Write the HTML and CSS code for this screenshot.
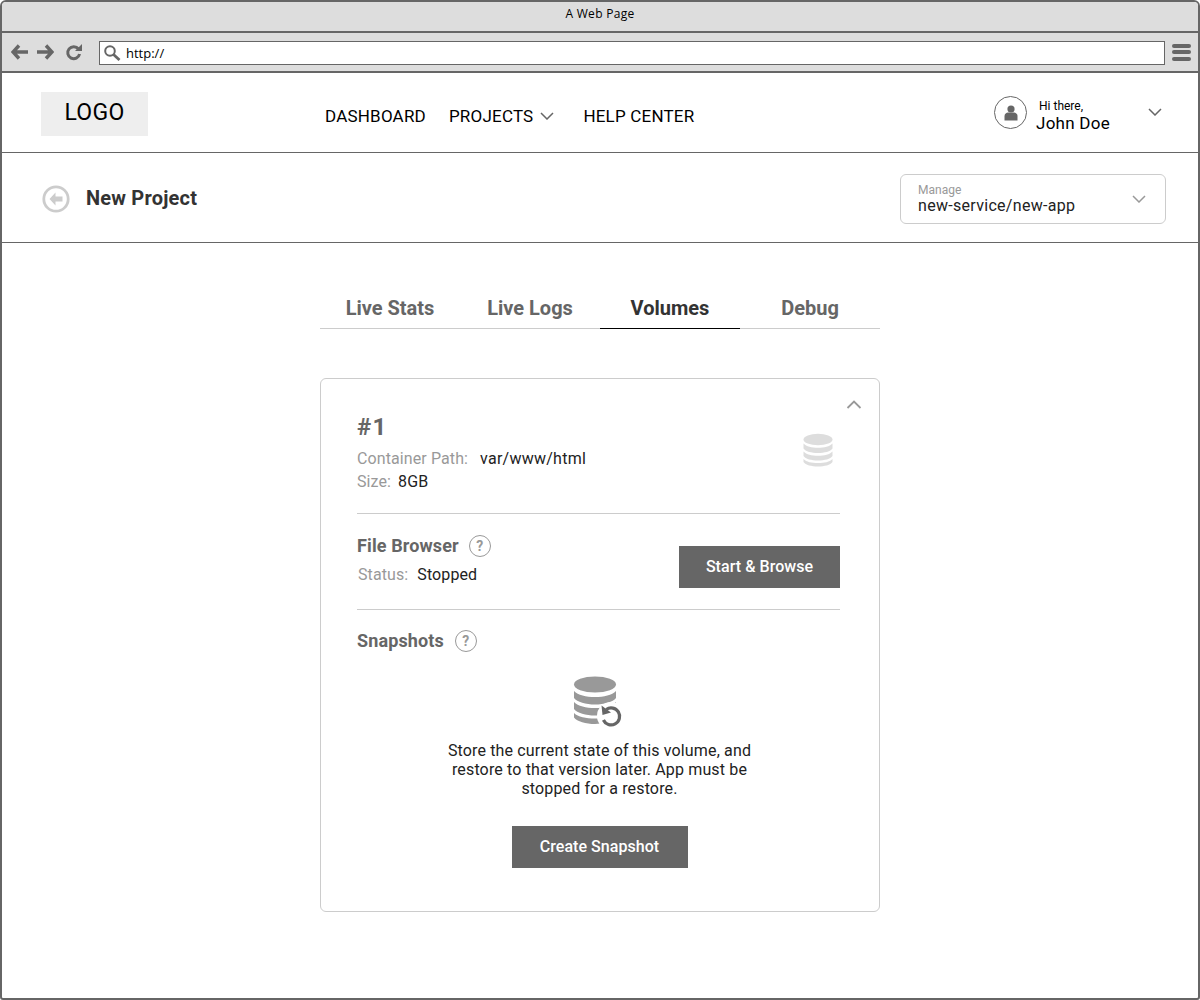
FILE: index.html
```html
<!DOCTYPE html>
<html lang="en">
<head>
<meta charset="utf-8">
<title>A Web Page</title>
<link rel="stylesheet" href="styles.css">
</head>
<body>
<div class="window">
  <div class="titlebar">A Web Page</div>
  <div class="toolbar">
    <svg class="tb-icon" width="18" height="16" viewBox="0 0 18 16"><path d="M8 1.500 2 8l6 6.500M2.500 8H17" fill="none" stroke="#666" stroke-width="3.400"/></svg>
    <svg class="tb-icon" width="18" height="16" viewBox="0 0 18 16"><path d="M10 1.500 16 8l-6 6.500M15.500 8H1" fill="none" stroke="#666" stroke-width="3.400"/></svg>
    <svg class="tb-icon reload" width="18" height="17" viewBox="0 0 18 17"><path d="M13.500 5A6 6 0 1 0 14.600 10" fill="none" stroke="#666" stroke-width="3"/><path d="M10 7h7V0z" fill="#666"/></svg>
    <div class="urlbar">
      <svg width="18" height="18" viewBox="0 0 18 18"><circle cx="7" cy="7" r="4.800" fill="none" stroke="#666" stroke-width="2"/><path d="m10.500 10.500 6 5.500" stroke="#666" stroke-width="2.800"/></svg>
      <span>http://</span>
    </div>
    <div class="burger"><i></i><i></i><i></i></div>
  </div>
  <header class="topnav">
    <div class="logo">LOGO</div>
    <nav class="menu">
      <a>DASHBOARD</a>
      <a class="has-caret">PROJECTS<svg width="14" height="8" viewBox="0 0 14 8"><path d="m1 1 6 6 6-6" fill="none" stroke="#666" stroke-width="1.500"/></svg></a>
      <a>HELP CENTER</a>
    </nav>
    <div class="user">
      <div class="avatar">
        <svg width="14" height="16" viewBox="0 0 14 16"><circle cx="7" cy="4" r="3.600" fill="#666"/><path d="M0.500 15.500V11c0-2.400 2-3.600 3.500-3.600h6c1.500 0 3.500 1.200 3.500 3.600v4.500z" fill="#666"/></svg>
      </div>
      <div class="user-text"><small>Hi there,</small><strong>John Doe</strong></div>
      <svg class="user-caret" width="14" height="8" viewBox="0 0 14 8"><path d="m1 1 6 6 6-6" fill="none" stroke="#666" stroke-width="1.500"/></svg>
    </div>
  </header>
  <section class="subhead">
    <svg class="back" width="28" height="28" viewBox="0 0 28 28"><circle cx="14" cy="14" r="12.200" fill="none" stroke="#ccc" stroke-width="2.800"/><path d="m13.500 7.500-6 6.500 6 6.500v-4h7v-5h-7z" fill="#ccc"/></svg>
    <h1>New Project</h1>
    <div class="manage">
      <div class="manage-text"><small>Manage</small><span>new-service/new-app</span></div>
      <svg width="14" height="8" viewBox="0 0 14 8"><path d="m1 1 6 6 6-6" fill="none" stroke="#999" stroke-width="1.500"/></svg>
    </div>
  </section>
  <main class="content">
    <div class="tabs">
      <a class="tab">Live Stats</a>
      <a class="tab">Live Logs</a>
      <a class="tab active">Volumes</a>
      <a class="tab">Debug</a>
    </div>
    <div class="card">
      <svg class="collapse" width="16" height="9" viewBox="0 0 16 9"><path d="m1.500 8 6.500-6.500 6.500 6.500" fill="none" stroke="#999" stroke-width="1.800"/></svg>
      <section class="block vol">
        <div>
          <h2>#1</h2>
          <p class="row first"><span class="lbl">Container Path:</span><span class="val">var/www/html</span></p>
          <p class="row second"><span class="lbl">Size:</span><span class="val">8GB</span></p>
        </div>
        <svg class="db" width="30" height="34" viewBox="0 0 30 34"><g fill="#ddd"><ellipse cx="15" cy="6.500" rx="14.500" ry="5.800"/><path d="M.5 10.500c3 3.200 8 4.300 14.500 4.300s11.500-1.100 14.500-4.300v5c-2 3-8 4.500-14.500 4.500S2.500 18.500.5 15.500z"/><path d="M.5 18.500c3 3.200 8 4.300 14.500 4.300s11.500-1.100 14.500-4.300v4.500c-2 3-8 4.500-14.500 4.500S2.500 26 .5 23z"/><path d="M.5 26c3 3 8 4 14.500 4s11.500-1 14.500-4v3c-2 3-8 4.500-14.500 4.500S2.500 32 .5 29z"/></g></svg>
      </section>
      <section class="block browser">
        <div class="browser-info">
          <h3>File Browser <span class="help">?</span></h3>
          <p class="row status"><span class="lbl">Status:</span><span class="val">Stopped</span></p>
        </div>
        <button class="btn">Start &amp; Browse</button>
      </section>
      <section class="snap">
        <h3>Snapshots <span class="help">?</span></h3>
        <div class="snap-body">
          <svg class="snap-icon" width="52" height="52" viewBox="0 0 52 52"><g fill="#999"><ellipse cx="22" cy="8.500" rx="21" ry="8"/><path d="M1 15c4 4 12 6 21 6s17-2 21-6v7c-3 4-12 6.500-21 6.500S4 26 1 22z"/><path d="M1 26c4 4 12 6 21 6s17-2 21-6v7c-3 4-12 6.500-21 6.500S4 37 1 33z"/><path d="M1 37c4 4 12 5.500 21 5.500 2 0 4 0 6-.3v5.300c-2 .3-4 .5-6 .5-9 0-18-2.500-21-6.500z"/></g><circle cx="38" cy="40" r="14" fill="#fff"/><path d="M33.200 33.500a8.500 8.500 0 1 1-2.800 10.500" fill="none" stroke="#666" stroke-width="3.200"/><path d="m28.500 29.500 1 9.500 8.500-2.500z" fill="#666"/></svg>
          <p class="snap-text">Store the current state of this volume, and<br>restore to that version later. App must be<br>stopped for a restore.</p>
          <button class="btn wide">Create Snapshot</button>
        </div>
      </section>
    </div>
  </main>
</div>
</body>
</html>
```
FILE: styles.css
```css
* { box-sizing: border-box; }
html, body { margin: 0; padding: 0; background: #fff; }
body { font-family: Roboto, "Liberation Sans", sans-serif; color: #000; }
h1, h2, h3, p { margin: 0; }

.window { height: 1000px; border: 2px solid #666; border-radius: 6px 6px 3px 3px; overflow: hidden; display: flex; flex-direction: column; }

.titlebar { height: 31px; background: #ddd; border-bottom: 2px solid #666; text-align: center; font: 12px/24px "Open Sans", sans-serif; letter-spacing: .3px; flex: none; }
.toolbar { height: 40px; background: #ddd; border-bottom: 2px solid #666; display: flex; align-items: center; padding: 0 7px 0 9px; flex: none; }
.tb-icon { margin-right: 7px; flex: none; }
.tb-icon.reload { margin-left: 4px; margin-right: 16px; }
.urlbar { flex: 1; height: 24px; margin-top: 1px; background: #fff; border: 1.500px solid #666; display: flex; align-items: center; padding-left: 3px; gap: 5px; font: 13px "Open Sans", sans-serif; }
.burger { width: 19px; margin-left: 7px; display: flex; flex-direction: column; gap: 2.500px; }
.burger i { display: block; height: 4px; border-radius: 2px; background: #666; }

.topnav { height: 80px; border-bottom: 1px solid #666; display: flex; align-items: center; padding: 0 0 0 39px; flex: none; }
.logo { width: 107px; height: 44px; margin-top: 2px; background: #eee; font-size: 23px; text-align: center; line-height: 41px; letter-spacing: .3px; }
.menu { display: flex; margin-left: 177px; font-size: 17px; letter-spacing: .2px; margin-top: 7px; align-items: center; }
.menu a { margin-right: 23px; white-space: nowrap; }
.menu .has-caret { margin-right: 29px; }
.menu svg { margin-left: 7px; vertical-align: 2px; }
.user { margin-left: auto; display: flex; align-items: center; padding-right: 36px; }
.avatar { width: 33px; height: 33px; margin-left: -1px; border: 1px solid #666; border-radius: 50%; display: flex; align-items: center; justify-content: center; margin-right: 9px; }
.user-text { display: flex; flex-direction: column; width: 112px; padding-top: 6px; }
.user-text small { font-size: 12px; line-height: 14px; margin-left: 3px; }
.user-text strong { font-weight: 400; font-size: 17px; line-height: 20px; letter-spacing: .25px; }
.user-caret { margin-top: -1px; }

.subhead { height: 90px; border-bottom: 1px solid #666; display: flex; align-items: center; padding: 0 32px 0 40px; flex: none; }
.subhead .back { flex: none; margin-top: 2px; }
.subhead h1 { font-size: 20px; font-weight: 700; color: #333; margin-left: 16px; letter-spacing: .2px; }
.manage { margin-left: auto; margin-top: 2px; width: 266px; height: 50px; border: 1px solid #ccc; border-radius: 6px; display: flex; align-items: center; justify-content: space-between; padding: 1px 19px 0 17px; }
.manage-text { display: flex; flex-direction: column; }
.manage-text small { font-size: 12px; line-height: 14px; color: #999; }
.manage-text span { font-size: 16px; line-height: 18px; color: #222; letter-spacing: .3px; }

.content { flex: 1; width: 560px; margin: 0 auto; padding-top: 46px; }
.tabs { display: flex; border-bottom: 1px solid #ccc; height: 40px; }
.tab { width: 140px; height: 40px; text-align: center; font-size: 20px; font-weight: 700; line-height: 38px; color: #666; }
.tab.active { color: #333; border-bottom: 1px solid #000; }

.card { margin-top: 49px; height: 534px; border: 1px solid #ccc; border-radius: 6px; padding: 0 39px 0 36px; position: relative; }
.collapse { position: absolute; top: 21px; right: 17px; }
.block { display: flex; justify-content: space-between; align-items: center; border-bottom: 1px solid #ccc; }
.vol { height: 135px; padding-top: 22px; align-items: flex-start; }
.vol .db { margin-top: 32px; margin-right: 7px; }
h2 { font-size: 24px; font-weight: 700; color: #666; line-height: 28px; margin-top: 12px; letter-spacing: 1.300px; }
.row { font-size: 16px; line-height: 23px; display: flex; gap: 9px; letter-spacing: .1px; }
.row.first { gap: 12px; margin-top: 6px; }
.row.first .val { letter-spacing: .25px; }
.row.second { gap: 7px; }
.lbl { color: #999; }
.val { color: #222; }
.browser { height: 96px; padding-top: 10px; }
.browser-info { margin-top: -12px; }
h3 { font-size: 18px; font-weight: 700; color: #666; line-height: 22px; display: flex; align-items: center; gap: 10px; letter-spacing: .12px; }
.snap h3 { gap: 11px; }
.help { width: 22px; height: 22px; border: 1px solid #999; border-radius: 50%; color: #999; font-size: 14px; line-height: 20px; text-align: center; }
.status { margin: 6px 0 0 1px; }
.btn { width: 161px; height: 42px; border: 0; background: #666; color: #fff; font: 500 16px Roboto, sans-serif; letter-spacing: .05px; padding: 0; }
.wide { width: 176px; margin-left: 2px; padding-bottom: 2px; }
.snap { padding-top: 20px; }
.snap-body { display: flex; flex-direction: column; align-items: center; }
.snap-icon { margin-top: 24px; margin-left: 0; }
.snap-text { font-size: 16px; line-height: 19px; color: #222; text-align: center; margin-top: 13px; letter-spacing: .15px; padding-left: 2px; }
.snap-body .btn { margin-top: 28px; }
```
